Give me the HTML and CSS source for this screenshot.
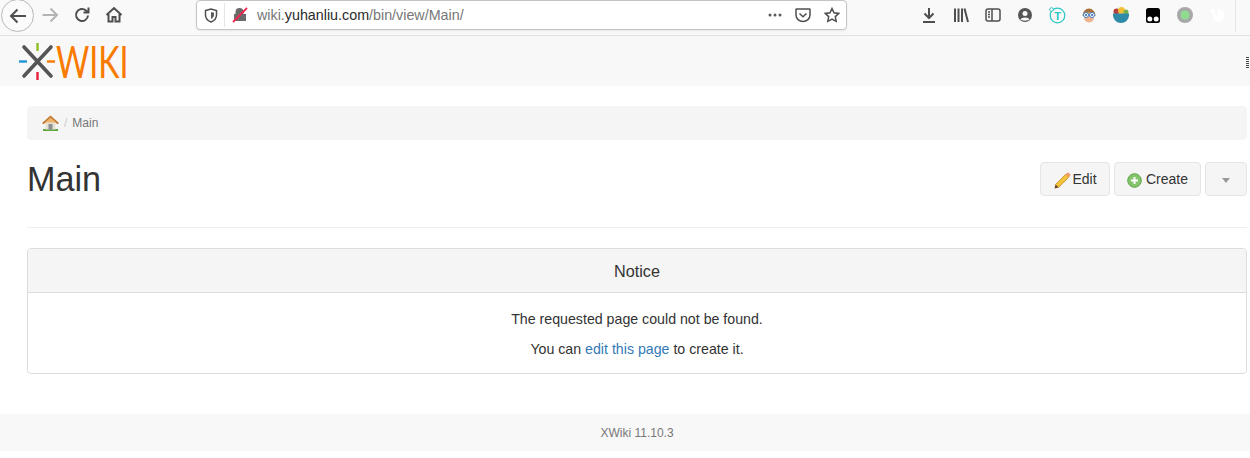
FILE: index.html
```html
<!DOCTYPE html>
<html lang="en">
<head>
<meta charset="utf-8">
<title>Main - XWiki</title>
<link rel="stylesheet" href="styles.css">
</head>
<body>
<header class="toolbar">
  <div class="tb-btn back">
    <svg width="20" height="20" viewBox="0 0 20 20" class="ic"><path d="M18 10H3M9.500 3.500 3 10l6.500 6.500"/></svg>
  </div>
  <div class="tb-btn">
    <svg width="18" height="18" viewBox="0 0 18 18" class="ic dim"><path d="M1.500 9h14M9.500 2.500 16 9l-6.500 6.500"/></svg>
  </div>
  <div class="tb-btn">
    <svg width="18" height="18" viewBox="0 0 18 18" class="ic"><path d="M15 9.500A6 6 0 1 1 13 4.500L15.500 6.500M15.500 1.500v5h-5"/></svg>
  </div>
  <div class="tb-btn">
    <svg width="18" height="18" viewBox="0 0 18 18" class="ic"><path d="M1.500 9 9 2l7.500 7M3.500 8v7.500h4v-4.500h3v4.500h4V8"/></svg>
  </div>
  <div class="urlbar">
    <svg width="14" height="15" viewBox="0 0 14 15" class="ic thin shield"><path d="M1.500 2.500 7 1l5.500 1.500V7c0 3.500-2.500 5.800-5.500 7C4 12.800 1.500 10.500 1.500 7z"/><path class="solid" d="M7 4 10 4.800V7c0 1.800-1.200 3.200-3 4z"/></svg>
    <span class="url-sep"></span>
    <svg width="16" height="16" viewBox="0 0 16 16" class="lock"><path class="lock-body" d="M2 14V7h1.500V5a4 4 0 0 1 8 0v2H14v7z"/><path class="lock-slash" d="M1 15 15 1"/></svg>
    <span class="url"><span class="url-dim">wiki.</span>yuhanliu.com<span class="url-dim">/bin/view/Main/</span></span>
    <svg width="16" height="16" viewBox="0 0 16 16" class="dots"><circle cx="3" cy="8" r="1.500"/><circle cx="8" cy="8" r="1.500"/><circle cx="13" cy="8" r="1.500"/></svg>
    <svg width="16" height="16" viewBox="0 0 16 16" class="ic thin pocket"><path d="M1.500 2h13a.5.5 0 0 1 .5.500V8a7 6.500 0 0 1-14 0V2.500a.5.5 0 0 1 .5-.5zM4.500 6.500 8 9.800l3.500-3.300"/></svg>
    <svg width="16" height="16" viewBox="0 0 16 16" class="ic thin star"><path d="M8 1.500l2 4.300 4.700.6-3.400 3.200.9 4.700L8 12l-4.200 2.300.9-4.700L1.300 6.400 6 5.800z"/></svg>
  </div>
  <div class="tb-right">
    <div class="tb-btn">
      <svg width="16" height="16" viewBox="0 0 16 16" class="ic"><path d="M8 1v10M3.500 6.500 8 11l4.500-4.500M2 15h12"/></svg>
    </div>
    <div class="tb-btn">
      <svg width="16" height="16" viewBox="0 0 16 16" class="ic"><path d="M2 1.500V15M5.500 1.500V15M9 1.500V15M11.500 1.500 15 15"/></svg>
    </div>
    <div class="tb-btn">
      <svg width="16" height="14" viewBox="0 0 16 14" class="ic thin"><rect x="1" y="1" width="14" height="12" rx="2"/><path d="M7 1v12M3 4h2M3 6.500h2M3 9h2"/></svg>
    </div>
    <div class="tb-btn">
      <svg width="16" height="16" viewBox="0 0 16 16"><circle cx="8" cy="8" r="7" fill="#555"/><circle cx="8" cy="6.500" r="2.500" fill="#f9f9f9"/><path d="M3.500 12.500C4.500 9.800 11.500 9.800 12.500 12.500 10.500 14 5.500 14 3.500 12.500z" fill="#f9f9f9"/></svg>
    </div>
    <div class="tb-btn">
      <svg width="18" height="18" viewBox="0 0 18 18"><circle cx="9.500" cy="9.500" r="7.300" fill="none" stroke="#2cc5c5" stroke-width="1.200"/><circle cx="3.500" cy="3.500" r="1.800" fill="#f9f9f9" stroke="#2cc5c5"/><text x="9.500" y="14" class="t-glyph">T</text></svg>
    </div>
    <div class="tb-btn">
      <svg width="16" height="16" viewBox="0 0 16 16"><path d="M1.500 9a6.500 7.500 0 0 1 13 0z" fill="#a8703a"/><circle cx="8" cy="10.500" r="5" fill="#eeb28c"/><circle cx="5" cy="8" r="2.500" fill="#fff" stroke="#3f7fd0"/><circle cx="11" cy="8" r="2.500" fill="#fff" stroke="#3f7fd0"/><circle cx="5" cy="8" r="1" fill="#2b5fa8"/><circle cx="11" cy="8" r="1" fill="#2b5fa8"/></svg>
    </div>
    <div class="tb-btn">
      <svg width="16" height="16" viewBox="0 0 16 16"><circle cx="3.500" cy="4.500" r="3" fill="#b5403f"/><circle cx="8.500" cy="3.500" r="3.500" fill="#f2c037"/><circle cx="13" cy="5" r="2.500" fill="#74b04c"/><path d="M0 6.500h16V8.500a8 7.500 0 0 1-16 0z" fill="#2f8aa8"/></svg>
    </div>
    <div class="tb-btn">
      <svg width="14" height="15" viewBox="0 0 14 15"><rect width="14" height="15" rx="2.500" fill="#000"/><circle cx="3.800" cy="11" r="2.500" fill="#fff"/><circle cx="10.200" cy="11" r="2.500" fill="#fff"/></svg>
    </div>
    <div class="tb-btn">
      <svg width="16" height="16" viewBox="0 0 16 16"><circle cx="8" cy="8" r="8" fill="#a8a8a8"/><circle cx="8" cy="8" r="4.500" fill="#8fdc8f"/></svg>
    </div>
    <div class="tb-btn">
      <svg width="16" height="16" viewBox="0 0 16 16"><path d="M1 2h4l2.500 8L9 2.200A6.500 6.500 0 0 1 15.500 8 7 7 0 0 1 9 15H6.500z" fill="#fff"/></svg>
    </div>
    <span class="tb-sep"></span>
  </div>
</header>

<nav class="navbar">
  <a class="logo">
    <svg width="37" height="37" viewBox="0 0 37 37" class="logo-mark">
      <path d="M6 4 33 33M33 4 6 33" stroke="#555" stroke-width="3.600" stroke-linecap="round"/>
      <path d="M19.500 0v8" stroke="#8cbf26" stroke-width="2.400"/>
      <path d="M19.500 29v8" stroke="#e6223c" stroke-width="2.400"/>
      <path d="M1 18.500h8" stroke="#1f95d6" stroke-width="2.400"/>
      <path d="M29 18.500h8" stroke="#f97a00" stroke-width="2.400"/>
    </svg>
    <span class="logo-text">WIKI</span>
  </a>
  <span class="grip"></span>
</nav>

<main class="content">
  <ol class="breadcrumb">
    <li class="crumb-home">
      <svg width="17" height="16" viewBox="0 0 17 16">
        <path d="M1 14h15v2H1z" fill="#5aa83c"/>
        <path d="M3.500 7h10v7.500h-10z" fill="#e8e0d0"/>
        <path d="M6.500 9h4v5.500h-4z" fill="#8b8f94"/>
        <path d="M8.500 0.500 0 8l1.500 1.200L8.500 3.500 15.500 9.200 17 8z" fill="#c27a35"/>
        <path d="M8.500 2.500 3 7.500h11z" fill="#eeb46c"/>
      </svg>
    </li>
    <li class="crumb-sep">/</li>
    <li>Main</li>
  </ol>

  <div class="page-header">
    <h1>Main</h1>
    <div class="actions">
      <a class="btn">
        <svg width="17" height="18" viewBox="0 0 17 18" class="pencil">
          <path d="M1.500 13.500 12 3l3 3L4.500 16.500z" fill="#f3c23f" stroke="#c68a1e" stroke-width=".8"/>
          <path d="M11.500 3.500 13 2a1.500 1.500 0 0 1 2 0l1 1a1.500 1.500 0 0 1 0 2l-1.500 1.500z" fill="#ee9a6a"/>
          <path d="M1.500 13.500 0.500 17.500 4.500 16.500z" fill="#6b4320"/>
        </svg>
        Edit
      </a>
      <a class="btn">
        <svg width="15" height="15" viewBox="0 0 15 15" class="plus">
          <circle cx="7.500" cy="7.500" r="6.800" fill="#84c56c" stroke="#5da548"/>
          <path d="M7.500 4v7M4 7.500h7" stroke="#fff" stroke-width="2"/>
        </svg>
        Create
      </a>
      <a class="btn caret-btn"><span class="caret"></span></a>
    </div>
  </div>

  <hr class="rule">

  <section class="panel">
    <h2 class="panel-heading">Notice</h2>
    <div class="panel-body">
      <p>The requested page could not be found.</p>
      <p>You can <a class="link">edit this page</a> to create it.</p>
    </div>
  </section>
</main>

<footer class="footer">XWiki 11.10.3</footer>
</body>
</html>
```

FILE: styles.css
```css
* { box-sizing: border-box; }

html, body {
  margin: 0;
  height: 458px;
  overflow: hidden;
  background: #fff;
}

body {
  font-family: "Liberation Sans", Arial, sans-serif;
  font-size: 14px;
  line-height: 20px;
  color: #333;
}

/* Browser toolbar */
.toolbar {
  display: flex;
  align-items: flex-start;
  height: 36px;
  padding-left: 1px;
  background: #f9f9f9;
  border-bottom: 1px solid #e1e1e2;
}

.tb-btn {
  flex: none;
  display: flex;
  align-items: center;
  justify-content: center;
  width: 32px;
  height: 30px;
}

.back {
  width: 33px;
  height: 33px;
  margin-top: -1px;
  border: 1px solid #b8b8b8;
  border-radius: 50%;
  background: #fbfbfb;
}

.ic {
  fill: none;
  stroke: #4f4f4f;
  stroke-width: 2;
}

.ic.thin { stroke-width: 1.500; }
.ic.dim { stroke: #b4b4b4; }
.ic .solid { fill: #5a5a5a; stroke: none; }

.urlbar {
  flex: none;
  display: flex;
  align-items: center;
  width: 651px;
  height: 30px;
  margin-left: 66px;
  padding-left: 7px;
  background: #fff;
  border: 1px solid #c4c4c4;
  border-radius: 4px;
  box-shadow: 0 1px 2px rgba(0, 0, 0, .08);
}

.url-sep {
  width: 1px;
  height: 24px;
  margin: 0 7px 0 6px;
  background: #e4e4e4;
}

.lock-body { fill: #6a6a6a; }
.lock-slash { fill: none; stroke: #f0254f; stroke-width: 1.800; }

.url {
  margin-left: 9px;
  flex: 1;
  font-size: 14.300px;
  color: #2a2a2a;
  white-space: nowrap;
}

.url-dim { color: #777; }

.dots { fill: #5a5a5a; margin-right: 12px; }
.pocket { margin-right: 13px; }
.star { margin-right: 6px; }

.tb-right {
  display: flex;
  align-items: flex-start;
  margin-left: 66px;
}

.tb-sep {
  width: 1px;
  height: 32px;
  margin-left: 2px;
  background: #e6e6e6;
}

.t-glyph {
  font: bold 11px "Liberation Sans", sans-serif;
  fill: #2cc5c5;
  text-anchor: middle;
}

/* Navbar */
.navbar {
  display: flex;
  align-items: center;
  justify-content: space-between;
  height: 50px;
  padding: 0 1px 0 18px;
  background: #f8f8f8;
}

.logo {
  display: flex;
  align-items: center;
  height: 37px;
}

.logo-mark { flex: none; }

.logo-text {
  display: inline-block;
  margin-left: 1px;
  font-family: Lato, sans-serif;
  font-weight: 400;
  font-size: 44px;
  line-height: 37px;
  color: #f97a00;
  transform: scaleX(.73);
  transform-origin: left center;
}

.grip {
  width: 3px;
  height: 12px;
  margin-top: 4px;
  background: repeating-linear-gradient(to bottom, #444 0, #444 1px, transparent 1px, transparent 2px);
}

/* Content */
.content {
  padding: 20px 3px 0 27px;
}

.breadcrumb {
  display: flex;
  align-items: center;
  gap: 5px;
  height: 34px;
  margin: 0;
  padding: 0 15px;
  list-style: none;
  background: #f5f5f5;
  border-radius: 4px;
  font-size: 12px;
  color: #777;
}

.crumb-home { display: flex; }
.crumb-sep { color: #ccc; }

.page-header {
  display: flex;
  justify-content: space-between;
  align-items: flex-start;
  margin-top: 22px;
}

h1 {
  margin: 0;
  font-size: 34.200px;
  font-weight: 400;
  line-height: 34px;
}

.actions {
  display: flex;
  gap: 4px;
}

.btn {
  display: flex;
  align-items: center;
  justify-content: center;
  gap: 1px;
  width: 70px;
  height: 34px;
  background: #f5f5f5;
  border: 1px solid #e5e5e5;
  border-radius: 4px;
  color: #333;
}

.btn:nth-child(2) { width: 87px; gap: 4px; }
.pencil { margin-left: 1px; margin-top: 2px; }
.plus { margin-top: 2px; }

.caret-btn { width: 42px; }

.caret {
  width: 0;
  height: 0;
  margin-top: 3px;
  border-top: 5px solid #999;
  border-left: 4px solid transparent;
  border-right: 4px solid transparent;
}

.rule {
  height: 1px;
  margin: 31px 0 20px;
  border: 0;
  background: #eee;
}

.panel {
  border: 1px solid #ddd;
  border-radius: 4px;
  background: #fff;
}

.panel-heading {
  height: 44px;
  margin: 0;
  padding-top: 1px;
  background: #f5f5f5;
  border-bottom: 1px solid #ddd;
  border-radius: 3px 3px 0 0;
  font-size: 16.200px;
  font-weight: 400;
  line-height: 43px;
  text-align: center;
}

.panel-body {
  padding: 16px 15px 14px;
  font-size: 14.200px;
  text-align: center;
}

.panel-body p { margin: 0 0 10px; }
.panel-body p:last-child { margin: 0; }

.link { color: #337ab7; }

/* Footer */
.footer {
  height: 37px;
  margin-top: 40px;
  padding-left: 24px;
  padding-top: 1px;
  background: #f8f8f8;
  font-size: 12px;
  line-height: 37px;
  text-align: center;
  color: #777;
}
```
